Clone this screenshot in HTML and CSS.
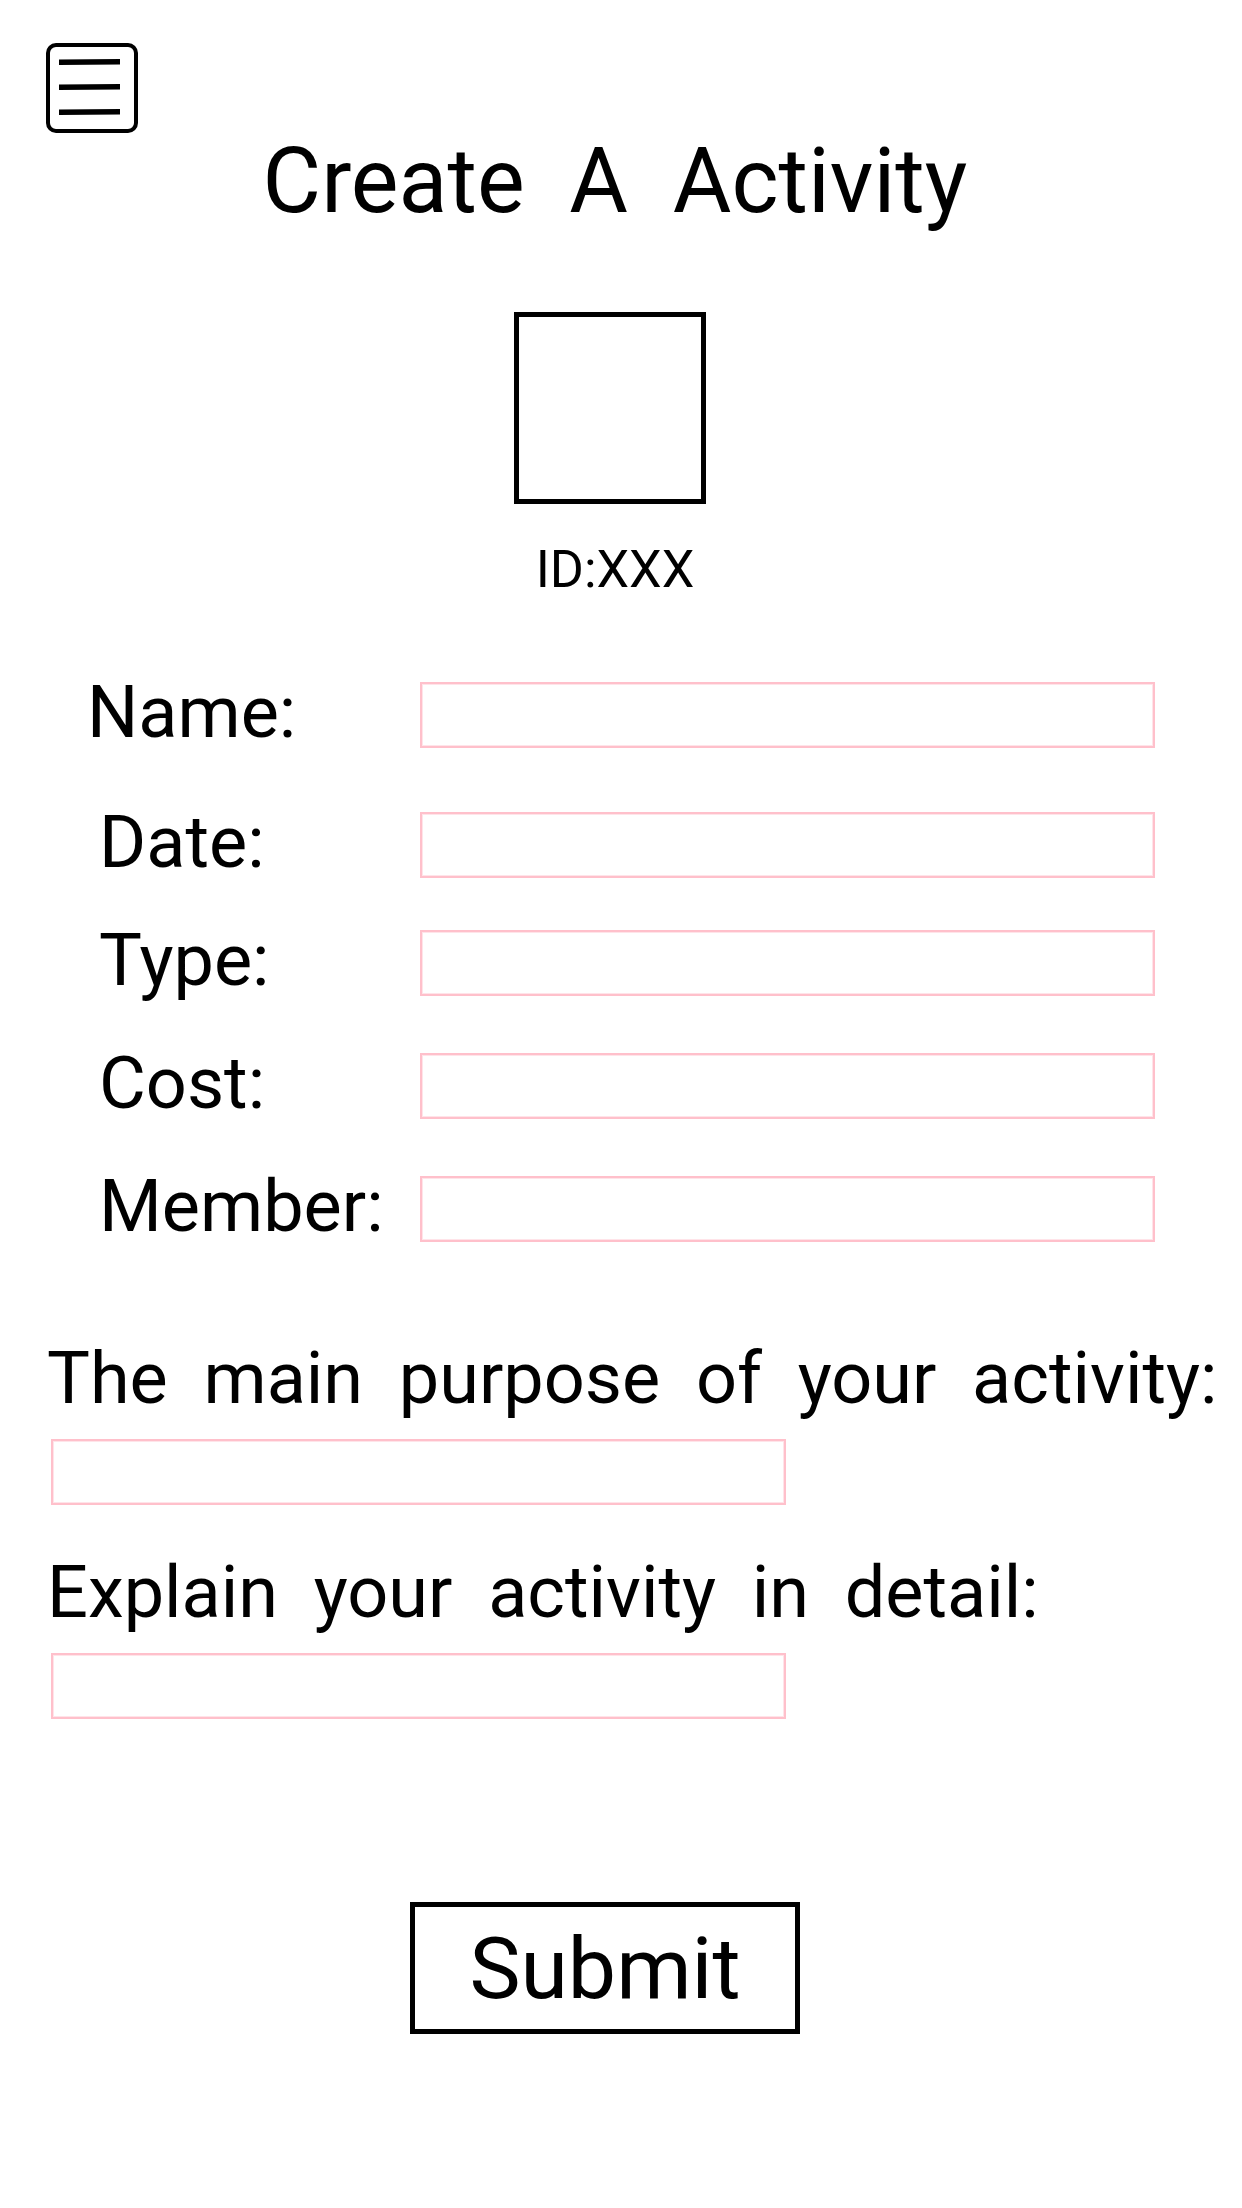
FILE: index.html
```html
<!DOCTYPE html>
<html lang="en">
<head>
  <meta charset="utf-8">
  <meta name="viewport" content="width=device-width, initial-scale=1">
  <title>Create A Activity</title>
  <link rel="stylesheet" href="styles.css">
</head>
<body>
  <header class="header">
    <button class="menu" type="button" aria-label="Menu">
      <svg class="menu-icon" viewBox="0 0 92 90" aria-hidden="true">
        <rect x="2" y="2" width="88" height="86" rx="8" fill="none" stroke="#000" stroke-width="4"/>
        <path d="M13 16.500 74 16v5.500L13 22zM13 41.500 74 41v5.500L13 47zM13 66.500 74 66v5.500L13 72z"/>
      </svg>
    </button>
    <h1 class="title">Create&nbsp; A&nbsp; Activity</h1>
  </header>
  <main>
    <div class="picture-row"><div class="picture"></div></div>
    <p class="activity-id">ID:XXX</p>
    <form class="form">
      <div class="fields">
        <div class="row row-loose">
          <label class="label" for="name">Name:</label>
          <input class="box" id="name" type="text">
        </div>
        <div class="row row-tight">
          <label class="label label-indent" for="date">Date:</label>
          <input class="box" id="date" type="text">
        </div>
        <div class="row">
          <label class="label label-indent" for="type">Type:</label>
          <input class="box" id="type" type="text">
        </div>
        <div class="row">
          <label class="label label-indent" for="cost">Cost:</label>
          <input class="box" id="cost" type="text">
        </div>
        <div class="row">
          <label class="label label-indent" for="member">Member:</label>
          <input class="box" id="member" type="text">
        </div>
      </div>
      <div class="questions">
        <div class="question">
          <label class="question-label" for="purpose">The&nbsp; main&nbsp; purpose&nbsp; of&nbsp; your&nbsp; activity:</label>
          <input class="box question-box" id="purpose" type="text">
        </div>
        <div class="question">
          <label class="question-label" for="detail">Explain&nbsp; your&nbsp; activity&nbsp; in&nbsp; detail:</label>
          <input class="box question-box" id="detail" type="text">
        </div>
      </div>
      <div class="actions">
        <button class="submit" type="submit">Submit</button>
      </div>
    </form>
  </main>
</body>
</html>
```
FILE: styles.css
```css
* {
  box-sizing: border-box;
}

body {
  margin: 0;
  background: #fff;
  color: #000;
  font-family: Roboto, "Liberation Sans", Arial, sans-serif;
  font-size: 72px;
}

.header {
  padding-top: 43px;
}

.menu {
  display: block;
  margin-left: 46px;
  padding: 0;
  border: 0;
  background: none;
}

.menu-icon {
  display: block;
  width: 92px;
  height: 90px;
}

.title {
  margin: 0;
  padding-right: 12px;
  font-size: 90px;
  font-weight: 400;
  line-height: 98px;
  text-align: center;
}

.picture-row {
  display: flex;
  justify-content: center;
  margin-top: 81px;
  padding-right: 22px;
}

.picture {
  width: 192px;
  height: 192px;
  border: 5px solid #000;
}

.activity-id {
  margin: 36px 0 0;
  padding-right: 12px;
  font-size: 52px;
  line-height: 60px;
  text-align: center;
}

.fields {
  padding: 82px 87px 0 87px;
}

.row {
  display: grid;
  grid-template-columns: 333px 1fr;
  align-items: start;
  margin-bottom: 57px;
}

.row-loose {
  margin-bottom: 64px;
}

.row-tight {
  margin-bottom: 52px;
}

.row:last-child {
  margin-bottom: 0;
}

.label {
  line-height: 62px;
}

.label-indent {
  padding-left: 12px;
}

.box {
  width: 100%;
  height: 66px;
  padding: 0 12px;
  border: 2px solid #ffc0cb;
  border-radius: 0;
  background: #fff;
  box-shadow: inset 0 0 0 1px #ffe4e9;
  color: #000;
  font-family: inherit;
  font-size: 40px;
}

.questions {
  display: grid;
  gap: 48px;
  margin-top: 97px;
  padding-left: 47px;
}

.question {
  display: grid;
  gap: 20px;
}

.question-label {
  line-height: 80px;
}

.question-box {
  max-width: 735px;
  margin-left: 4px;
}

.actions {
  display: flex;
  justify-content: center;
  padding: 183px 32px 48px 0;
}

.submit {
  height: 132px;
  padding: 0 54px;
  border: 5px solid #000;
  background: #fff;
  color: #000;
  font-family: inherit;
  font-size: 86px;
}
```
